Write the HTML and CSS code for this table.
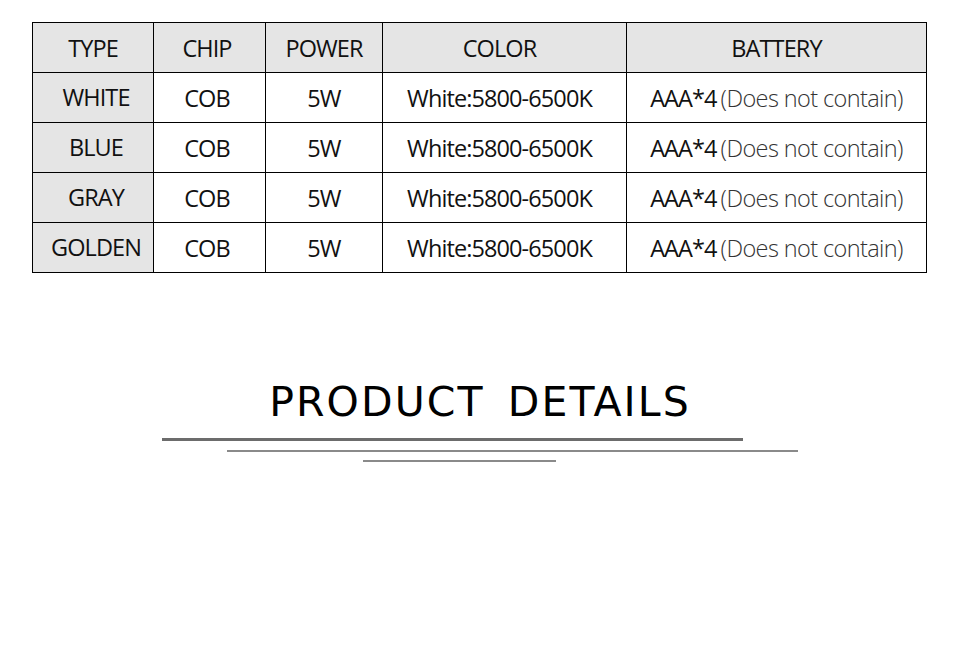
FILE: index.html
```html
<!DOCTYPE html>
<html>
<head>
<meta charset="utf-8">
<link rel="stylesheet" href="styles.css">
</head>
<body>
<div class="page">
  <table class="spec">
    <colgroup>
      <col class="c1"><col class="c2"><col class="c3"><col class="c4"><col class="c5">
    </colgroup>
    <thead>
      <tr>
        <th class="shade">TYPE</th>
        <th class="shade chip">CHIP</th>
        <th class="shade">POWER</th>
        <th class="shade col">COLOR</th>
        <th class="shade">BATTERY</th>
      </tr>
    </thead>
    <tbody>
      <tr>
        <td class="shade name">WHITE</td>
        <td class="chip">COB</td>
        <td>5W</td>
        <td class="col">White:5800-6500K</td>
        <td>AAA*4<span class="note">(Does not contain)</span></td>
      </tr>
      <tr>
        <td class="shade name">BLUE</td>
        <td class="chip">COB</td>
        <td>5W</td>
        <td class="col">White:5800-6500K</td>
        <td>AAA*4<span class="note">(Does not contain)</span></td>
      </tr>
      <tr>
        <td class="shade name">GRAY</td>
        <td class="chip">COB</td>
        <td>5W</td>
        <td class="col">White:5800-6500K</td>
        <td>AAA*4<span class="note">(Does not contain)</span></td>
      </tr>
      <tr>
        <td class="shade name">GOLDEN</td>
        <td class="chip">COB</td>
        <td>5W</td>
        <td class="col">White:5800-6500K</td>
        <td>AAA*4<span class="note">(Does not contain)</span></td>
      </tr>
    </tbody>
  </table>

  <section class="details">
    <h1 class="title">PRODUCT DETAILS</h1>
    <div class="rule rule1"></div>
    <div class="rule rule2"></div>
    <div class="rule rule3"></div>
  </section>
</div>
</body>
</html>
```

FILE: styles.css
```css
html, body {
  margin: 0;
  padding: 0;
  background: #ffffff;
}

.page {
  width: 960px;
  height: 669px;
  padding-top: 22px;
  box-sizing: border-box;
  font-family: "Open Sans", "Liberation Sans", sans-serif;
  color: #111111;
}

.spec {
  margin-left: 32px;
  border-collapse: collapse;
  table-layout: fixed;
  width: 894px;
}

.c1 { width: 121px; }
.c2 { width: 112px; }
.c3 { width: 117px; }
.c4 { width: 244px; }
.c5 { width: 300px; }

.spec tr {
  height: 50px;
}

.spec th,
.spec td {
  border: 1.5px solid #000000;
  padding: 0;
  text-align: center;
  vertical-align: middle;
  font-size: 23.5px;
  font-weight: 400;
  letter-spacing: -0.9px;
  white-space: nowrap;
}

.spec .col {
  padding-right: 10px;
}

.spec .chip {
  padding-right: 5px;
}

.spec td.name {
  padding-left: 6px;
  padding-bottom: 2px;
}

.shade {
  background: #e5e5e5;
}

.note {
  font-weight: 300;
  color: #333333;
  margin-left: 4px;
  letter-spacing: -0.6px;
}

.details {
  display: flex;
  flex-direction: column;
  margin-top: 105px;
}

.title {
  margin: 0;
  text-align: center;
  font-family: "DejaVu Sans", sans-serif;
  font-weight: 400;
  font-size: 41px;
  line-height: 48px;
  letter-spacing: 2.1px;
  word-spacing: 8px;
  color: #000000;
}

.rule {
  height: 2px;
}

.rule1 {
  margin-left: 162px;
  width: 581px;
  height: 3px;
  margin-top: 12px;
  background: #6c6c6c;
}

.rule2 {
  margin-left: 227px;
  width: 571px;
  margin-top: 9px;
  background: #8a8a8a;
}

.rule3 {
  margin-left: 363px;
  width: 193px;
  margin-top: 8px;
  background: #8a8a8a;
}
```
